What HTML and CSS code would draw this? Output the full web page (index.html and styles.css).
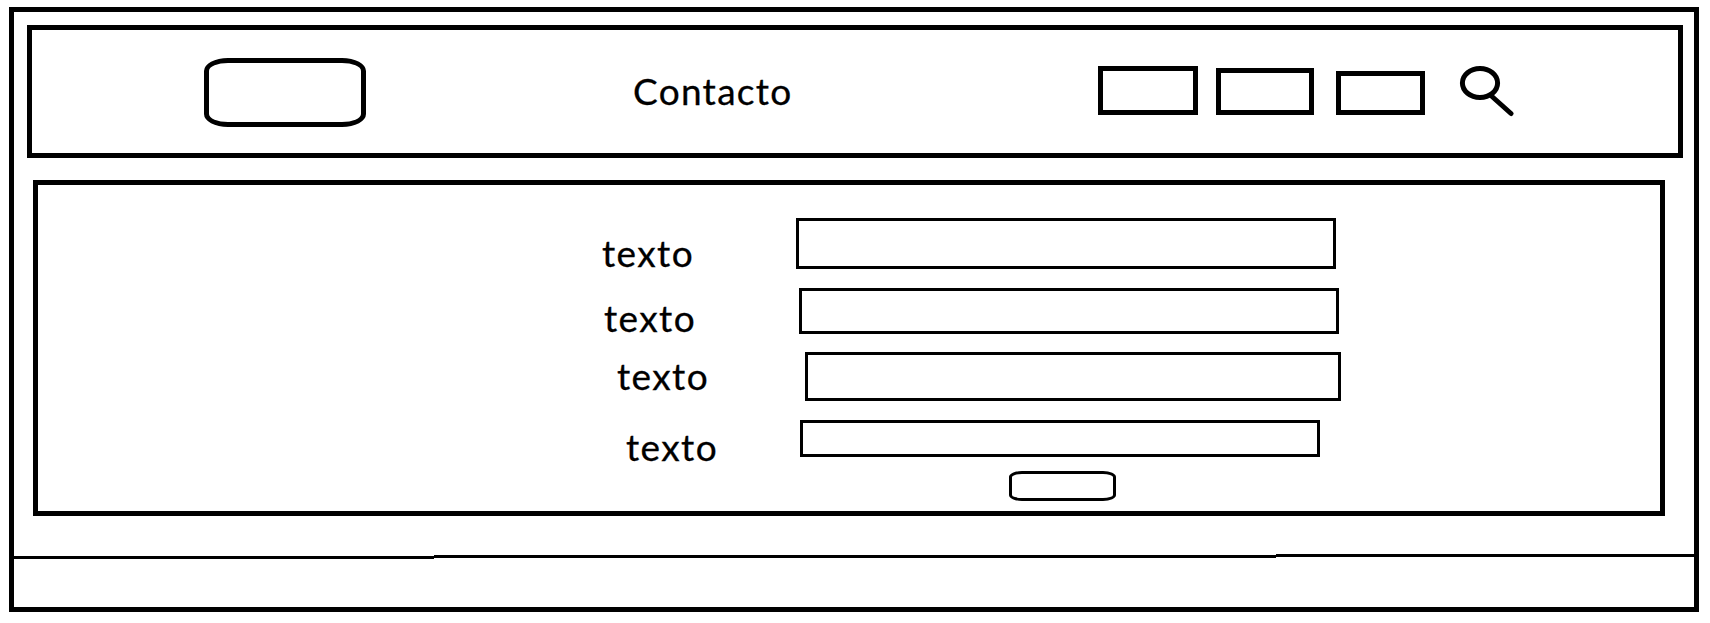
FILE: index.html
```html
<!DOCTYPE html>
<html lang="es">
<head>
<meta charset="utf-8">
<title>Contacto</title>
<link rel="stylesheet" href="styles.css">
</head>
<body>
<div class="page">
  <header class="header">
    <div class="logo"></div>
    <h1 class="title">Contacto</h1>
    <nav class="nav">
      <a class="nav-item nav-first"></a>
      <a class="nav-item nav-second"></a>
      <a class="nav-item nav-third"></a>
    </nav>
    <svg class="search" width="56" height="52" viewBox="0 0 56 52">
      <ellipse cx="21" cy="18" rx="17.6" ry="14.5"/>
      <path d="M33 31.5 L52 48.5"/>
    </svg>
  </header>
  <main class="panel">
    <form class="form">
      <div class="row row-one"><label class="label">texto</label><div class="field"></div></div>
      <div class="row row-two"><label class="label">texto</label><div class="field"></div></div>
      <div class="row row-three"><label class="label">texto</label><div class="field"></div></div>
      <div class="row row-four"><label class="label">texto</label><div class="field"></div></div>
      <div class="submit"></div>
    </form>
  </main>
  <footer class="footer">
    <div class="rule rule-left"></div>
    <div class="rule rule-middle"></div>
    <div class="rule rule-right"></div>
  </footer>
</div>
</body>
</html>
```

FILE: styles.css
```css
* { box-sizing: border-box; }

body {
  margin: 0;
  padding: 7px 11px 11px 9px;
  background: #fff;
  color: #000;
  font-family: Lato, "Liberation Sans", sans-serif;
  font-size: 37px;
  line-height: 40px;
}

.page {
  display: flex;
  flex-direction: column;
  height: 605px;
  border: 5px solid #000;
}

.header {
  display: flex;
  align-items: flex-start;
  height: 133px;
  margin: 13px 11px 0 13px;
  border: 5px solid #000;
}

.logo {
  width: 162px;
  height: 69px;
  margin: 28px 0 0 172px;
  border: 5px solid #000;
  border-radius: 24px / 13px;
}

.title {
  width: 160px;
  margin: 41px 0 0 267px;
  font-size: 37px;
  font-weight: 400;
  letter-spacing: 1.3px;
  -webkit-text-stroke: 0.3px #000;
  white-space: nowrap;
}

.nav {
  display: flex;
  align-items: flex-end;
  height: 49px;
  margin: 36px 0 0 305px;
}

.nav-item { border: 5px solid #000; }
.nav-first { width: 100px; height: 49px; }
.nav-second { width: 98px; height: 47px; margin-left: 18px; }
.nav-third { width: 89px; height: 44px; margin-left: 22px; }

.search {
  margin: 35px 0 0 34px;
  fill: none;
  stroke: #000;
  stroke-width: 5;
  stroke-linecap: round;
}

.panel {
  height: 336px;
  margin: 22px 29px 0 19px;
  padding-top: 33px;
  border: 5px solid #000;
}

.form {
  display: flex;
  flex-direction: column;
}

.row {
  display: flex;
  align-items: flex-start;
}

.label {
  width: 100px;
  letter-spacing: 1.4px;
  -webkit-text-stroke: 0.3px #000;
}

.field { border: 3px solid #000; }

.row-one { height: 70px; padding-left: 564px; }
.row-one .label { margin-top: 15px; }
.row-one .field { width: 540px; height: 51px; margin-left: 94px; }

.row-two { height: 64px; padding-left: 566px; }
.row-two .label { margin-top: 10px; }
.row-two .field { width: 540px; height: 46px; margin-left: 95px; }

.row-three { height: 68px; padding-left: 579px; }
.row-three .label { margin-top: 4px; }
.row-three .field { width: 536px; height: 49px; margin-left: 88px; }

.row-four { height: 51px; padding-left: 588px; }
.row-four .label { margin-top: 7px; }
.row-four .field { width: 520px; height: 37px; margin-left: 74px; }

.submit {
  width: 107px;
  height: 30px;
  margin-left: 971px;
  border: 3px solid #000;
  border-radius: 13px / 6px;
}

.footer {
  display: flex;
  height: 53px;
  margin-top: 38px;
}

.rule { height: 3px; background: #000; }
.rule-left { width: 420px; margin-top: 2px; }
.rule-middle { width: 842px; margin-top: 1px; }
.rule-right { flex: 1; }
```
